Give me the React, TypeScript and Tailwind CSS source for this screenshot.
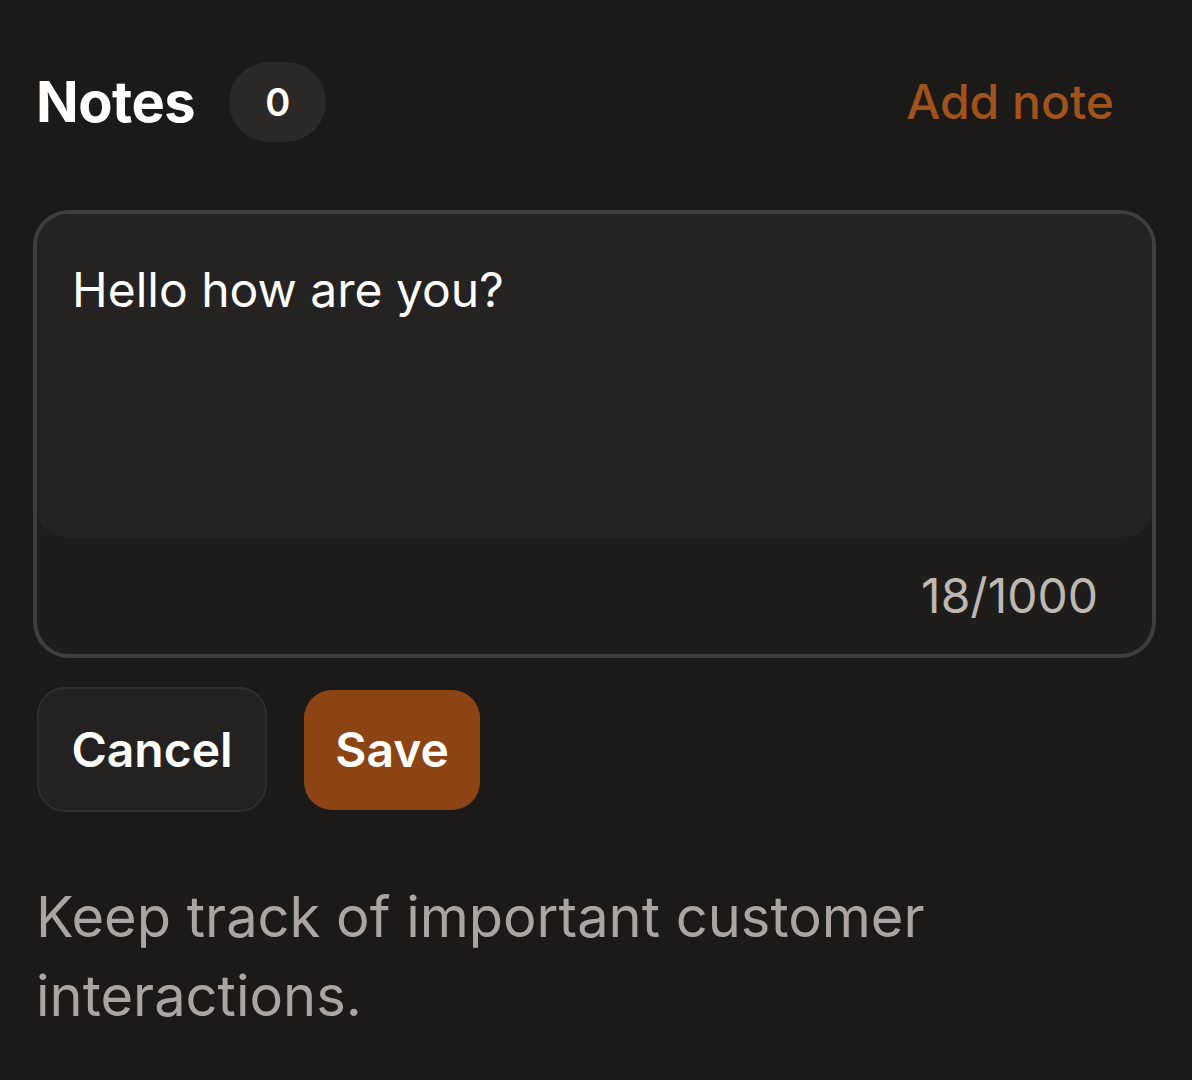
import { useState } from "react";

const MAX = 1000;

export default function App() {
  const [text, setText] = useState("Hello how are you?");
  const count = 0;

  return (
    <main
      className="min-h-[1080px] w-full bg-[#1b1a19] pl-[35px] pr-[36px] pt-[62px]"
      style={{ fontFamily: "Inter, 'Noto Sans', sans-serif" }}
    >
      <div className="flex h-[80px] items-center justify-between">
        <div className="flex items-center gap-[34px] pl-[1px]">
          <h2 className="text-[56px] font-bold leading-none tracking-[-0.5px] text-white">Notes</h2>
          <span className="flex h-[80px] w-[97px] items-center justify-center rounded-full bg-[#2a2928] text-[38px] font-semibold text-white">
            {count}
          </span>
        </div>
        <button className="pr-[42px] text-[48px] font-medium text-[#a2521c]">Add note</button>
      </div>

      <div className="-ml-[2px] mt-[68px] overflow-hidden rounded-[36px] border-[4px] border-[#403e3b] bg-[#1e1d1c]">
        <textarea
          value={text}
          maxLength={MAX}
          onChange={(e) => setText(e.target.value)}
          className="block h-[323px] w-full resize-none rounded-b-[28px] bg-[#242322] px-[35px] pt-[40px] text-[48px] leading-[72px] text-white outline-none"
        />
        <div className="flex h-[117px] items-center justify-end pr-[54px] text-[48px] text-[#bdb8b2]">
          {text.length}/{MAX}
        </div>
      </div>

      <div className="mt-[29px] flex items-center gap-[37px] pl-[2px]">
        <button className="h-[125px] w-[230px] rounded-[28px] border-2 border-[#302f2d] bg-[#232221] text-[48px] font-semibold text-white">
          Cancel
        </button>
        <button className="h-[120px] w-[176px] rounded-[28px] bg-[#8d4414] text-[48px] font-semibold text-white">
          Save
        </button>
      </div>

      <p className="mt-[66px] max-w-[960px] pl-[1px] text-[56px] leading-[79px] text-[#aaa5a0]">
        Keep track of important customer interactions.
      </p>
    </main>
  );
}
